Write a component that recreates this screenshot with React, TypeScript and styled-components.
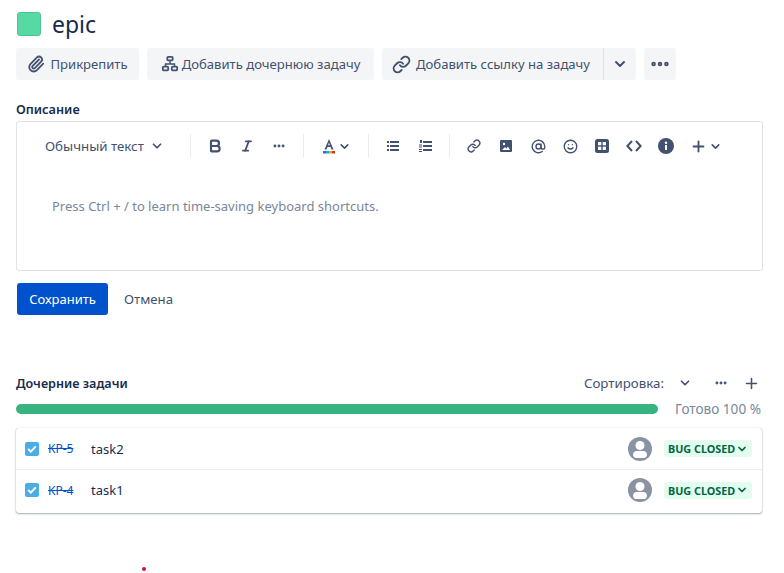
import React from "react";
import styled, { createGlobalStyle } from "styled-components";
import {
  Paperclip,
  Link as LinkIcon,
  ChevronDown,
  Bold,
  Italic,
  MoreHorizontal,
  Plus,
  AtSign,
  Smile,
} from "lucide-react";

const GlobalStyle = createGlobalStyle`
  html, body { margin: 0; padding: 0; background: #fff; overflow: hidden; }
  body { font-family: "Noto Sans", "Open Sans", sans-serif; color: #172b4d; }
`;

const Page = styled.div`
  position: relative;
  width: 784px;
  height: 573px;
  padding: 12px 21px 0 16px;
  box-sizing: border-box;
`;

const TitleRow = styled.div`
  display: flex;
  align-items: center;
  gap: 11px;
  height: 24px;
  padding-left: 1px;
`;

const EpicSwatch = styled.div`
  width: 24px;
  height: 24px;
  box-sizing: border-box;
  border-radius: 3px;
  background: #57d9a3;
  border: 1px solid #4cc392;
`;

const Title = styled.h1`
  margin: 0;
  font-size: 23px;
  font-weight: 400;
  line-height: 28px;
`;

const ActionBar = styled.div`
  display: flex;
  gap: 8px;
  margin-top: 12px;
`;

const ActionButton = styled.button<{ $w: number; $joined?: boolean; $gap?: number }>`
  display: flex;
  align-items: center;
  justify-content: ${(p) => (p.$joined === undefined ? "center" : "flex-start")};
  gap: ${(p) => p.$gap ?? 5}px;
  width: ${(p) => p.$w}px;
  height: 32px;
  padding: 0 ${(p) => (p.$joined === undefined ? 0 : 10)}px;
  border: none;
  border-radius: 3px;
  background: #f4f5f7;
  color: #42526e;
  font: 400 13.1px "Noto Sans", sans-serif;
  white-space: nowrap;
`;

const SplitGroup = styled.div`
  display: flex;
`;

const SplitMain = styled(ActionButton)`
  border-radius: 3px 0 0 3px;
  border-right: 1px solid #dfe1e6;
`;

const SplitArrow = styled(ActionButton)`
  border-radius: 0 3px 3px 0;
`;

const SectionLabel = styled.h2`
  margin: 19px 0 0;
  font-size: 12.7px;
  font-weight: 600;
  line-height: 20px;
  color: #172b4d;
`;

const Editor = styled.div`
  height: 150px;
  margin-top: 2px;
  box-sizing: border-box;
  border: 1px solid #dfe1e6;
  border-radius: 3px;
`;

const Toolbar = styled.div`
  display: flex;
  align-items: center;
  height: 24px;
  margin-top: 12px;
  color: #42526e;
`;

const BlockSelect = styled.div`
  display: flex;
  align-items: center;
  gap: 6px;
  width: 165px;
  padding-left: 28px;
  box-sizing: border-box;
  font-size: 13.3px;
  white-space: nowrap;
`;

const ToolDivider = styled.div`
  width: 1px;
  height: 24px;
  background: #ebecf0;
  margin: 0 8px;
`;

const Tool = styled.span<{ $w?: number }>`
  display: flex;
  align-items: center;
  justify-content: center;
  gap: 2px;
  width: ${(p) => p.$w ?? 32}px;
  height: 24px;
  color: #42526e;
`;

const Placeholder = styled.div`
  margin: 38px 0 0 35px;
  font-size: 13px;
  line-height: 20px;
  color: #7a869a;
`;

const FormActions = styled.div`
  display: flex;
  align-items: center;
  gap: 16px;
  margin: 12px 0 0 1px;
`;

const SaveButton = styled.button`
  width: 91px;
  height: 32px;
  border: none;
  border-radius: 3px;
  background: #0052cc;
  color: #fff;
  font: 400 13px "Noto Sans", sans-serif;
`;

const CancelLink = styled.span`
  font-size: 13.2px;
  color: #42526e;
`;

const ChildHeader = styled.div`
  display: flex;
  align-items: center;
  justify-content: space-between;
  margin-top: 58px;
  height: 20px;
`;

const ChildTitle = styled.h3`
  margin: 0;
  font-size: 12.6px;
  font-weight: 600;
  color: #172b4d;
`;

const ChildTools = styled.div`
  display: flex;
  align-items: center;
  padding-right: 3px;
  color: #42526e;
  font-size: 13.3px;
`;

const SortLabel = styled.span`
  margin-right: 14px;
`;

const HeaderIcon = styled.span<{ $gap?: number }>`
  display: flex;
  margin-left: ${(p) => p.$gap ?? 0}px;
`;

const ProgressRow = styled.div`
  display: flex;
  align-items: center;
  gap: 17px;
  margin-top: 11px;
`;

const ProgressTrack = styled.div`
  width: 642px;
  height: 10px;
  border-radius: 5px;
  background: #36b37e;
`;

const ProgressLabel = styled.span`
  font-size: 13.6px;
  line-height: 10px;
  color: #7a869a;
  white-space: nowrap;
`;

const TaskCard = styled.div`
  width: 746px;
  margin-top: 14px;
  border-radius: 3px;
  box-shadow: 0 1px 2px rgba(9, 30, 66, 0.35), 0 0 1px rgba(9, 30, 66, 0.3);
`;

const TaskRow = styled.div<{ $first?: boolean }>`
  display: flex;
  align-items: center;
  height: ${(p) => (p.$first ? 42 : 43)}px;
  box-sizing: border-box;
  padding: 0 10px ${(p) => (p.$first ? 0 : 3)}px 9px;
  border-bottom: ${(p) => (p.$first ? "1px solid #ebecf0" : "none")};
`;

const CheckBox = styled.span`
  display: flex;
  align-items: center;
  justify-content: center;
  width: 14px;
  height: 14px;
  border-radius: 2px;
  background: #4bade8;
`;

const TaskKey = styled.a`
  margin-left: 9px;
  width: 43px;
  font-size: 12px;
  color: #0052cc;
  text-decoration: line-through;
`;

const TaskName = styled.span`
  flex: 1;
  font-size: 13px;
  color: #172b4d;
`;

const Avatar = styled.span`
  display: flex;
  margin-right: 12px;
`;

const StatusLozenge = styled.span`
  display: flex;
  align-items: center;
  gap: 1px;
  width: 88px;
  height: 17px;
  box-sizing: border-box;
  padding-left: 4px;
  border-radius: 3px;
  background: #e3fcef;
  color: #006644;
  font-size: 10.8px;
  font-weight: 700;
  white-space: nowrap;
`;

const RedDot = styled.span`
  position: absolute;
  left: 142px;
  top: 567px;
  width: 4px;
  height: 4px;
  border-radius: 50%;
  background: #e0102a;
`;

const HierarchyIcon = () => (
  <svg width="18" height="18" viewBox="0 0 20 20" fill="none" stroke="#42526e" strokeWidth="2">
    <rect x="7" y="2" width="6" height="4" rx="1" />
    <rect x="2" y="13" width="6" height="4" rx="1" />
    <rect x="12" y="13" width="6" height="4" rx="1" />
    <path d="M10 6v4M5 13v-3h10v3" strokeWidth="1.6" />
  </svg>
);

const BulletIcon = () => (
  <svg width="12" height="10" viewBox="0 0 12 10" fill="#42526e">
    <rect x="0" y="0" width="2" height="2" />
    <rect x="0" y="4" width="2" height="2" />
    <rect x="0" y="8" width="2" height="2" />
    <rect x="3" y="0" width="9" height="2" />
    <rect x="3" y="4" width="9" height="2" />
    <rect x="3" y="8" width="9" height="2" />
  </svg>
);

const NumberIcon = () => (
  <svg width="13" height="12" viewBox="0 0 13 12" fill="#42526e">
    <rect x="1" y="0" width="2" height="3" />
    <rect x="0" y="4.500" width="3" height="1" />
    <rect x="0" y="6.500" width="3" height="1" />
    <rect x="0" y="9" width="3" height="1" />
    <rect x="0" y="11" width="3" height="1" />
    <rect x="4" y="1" width="9" height="2" />
    <rect x="4" y="5" width="9" height="2" />
    <rect x="4" y="9" width="9" height="2" />
  </svg>
);

const ImageIcon = () => (
  <svg width="12" height="12" viewBox="0 0 12 12">
    <rect width="12" height="12" rx="1" fill="#42526e" />
    <circle cx="4" cy="4" r="1.2" fill="#fff" />
    <path d="M2 10l3-3 1.500 1.500L8 6.500 10 10z" fill="#fff" />
  </svg>
);

const TableIcon = () => (
  <svg width="14" height="14" viewBox="0 0 14 14">
    <rect width="14" height="14" rx="2.500" fill="#42526e" />
    <rect x="3" y="3" width="3.300" height="3.300" fill="#fff" />
    <rect x="7.700" y="3" width="3.300" height="3.300" fill="#fff" />
    <rect x="3" y="7.700" width="3.300" height="3.300" fill="#fff" />
    <rect x="7.700" y="7.700" width="3.300" height="3.300" fill="#fff" />
  </svg>
);

const CodeIcon = () => (
  <svg width="16" height="12" viewBox="0 0 16 12" fill="none" stroke="#42526e" strokeWidth="2">
    <path d="M6 1L1.400 6 6 11M10 1l4.600 5L10 11" />
  </svg>
);

const InfoIcon = () => (
  <svg width="16" height="16" viewBox="0 0 16 16">
    <circle cx="8" cy="8" r="8" fill="#42526e" />
    <rect x="7" y="7" width="2" height="5" fill="#fff" />
    <circle cx="8" cy="4.700" r="1.200" fill="#fff" />
  </svg>
);

const TextColorIcon = () => (
  <svg width="14" height="16" viewBox="0 0 14 16">
    <path d="M7 1L2.500 11.500h2l1-2.600h3l1 2.600h2L7 1zM6.100 7.200L7 4.600l.9 2.600z" fill="#42526e" />
    <rect x="1" y="13" width="3" height="2.500" fill="#6554c0" />
    <rect x="4" y="13" width="3" height="2.500" fill="#00b8d9" />
    <rect x="7" y="13" width="3" height="2.500" fill="#ff991f" />
    <rect x="10" y="13" width="3" height="2.500" fill="#de350b" />
  </svg>
);

const CheckMark = () => (
  <svg width="10" height="8" viewBox="0 0 10 8" fill="none" stroke="#fff" strokeWidth="2">
    <path d="M1.200 4l2.600 2.600L8.800 1.400" />
  </svg>
);

const PersonAvatar = () => (
  <svg width="24" height="24" viewBox="0 0 24 24">
    <circle cx="12" cy="12" r="12" fill="#8993a4" />
    <circle cx="12" cy="8.500" r="4.500" fill="#fff" />
    <path d="M5 17.500c0-2.500 2-3.500 4-3.500h6c2 0 4 1 4 3.500 0 1.500-1 3.500-3 3.500H8c-2 0-3-2-3-3.500z" fill="#fff" />
  </svg>
);

const Chevron = ({ size = 16 }: { size?: number }) => <ChevronDown size={size} strokeWidth={3} />;

const tasks = [
  { key: "KP-5", name: "task2" },
  { key: "KP-4", name: "task1" },
];

export default function App() {
  return (
    <>
      <GlobalStyle />
      <Page>
        <TitleRow>
          <EpicSwatch />
          <Title>epic</Title>
        </TitleRow>

        <ActionBar>
          <ActionButton $w={123}>
            <Paperclip size={18} strokeWidth={2.4} />
            Прикрепить
          </ActionButton>
          <ActionButton $w={227} $gap={3}>
            <HierarchyIcon />
            Добавить дочернюю задачу
          </ActionButton>
          <SplitGroup>
            <SplitMain $w={222} $joined>
              <LinkIcon size={19} strokeWidth={2.4} />
              Добавить ссылку на задачу
            </SplitMain>
            <SplitArrow $w={32}>
              <Chevron />
            </SplitArrow>
          </SplitGroup>
          <ActionButton $w={32}>
            <MoreHorizontal size={22} strokeWidth={3} />
          </ActionButton>
        </ActionBar>

        <SectionLabel>Описание</SectionLabel>
        <Editor>
          <Toolbar>
            <BlockSelect>
              Обычный текст
              <Chevron size={14} />
            </BlockSelect>
            <ToolDivider />
            <Tool>
              <Bold size={16} strokeWidth={3.2} />
            </Tool>
            <Tool>
              <Italic size={14} strokeWidth={3} />
            </Tool>
            <Tool>
              <MoreHorizontal size={14} strokeWidth={3} />
            </Tool>
            <ToolDivider />
            <Tool $w={48}>
              <TextColorIcon />
              <Chevron size={13} />
            </Tool>
            <ToolDivider />
            <Tool>
              <BulletIcon />
            </Tool>
            <Tool>
              <NumberIcon />
            </Tool>
            <ToolDivider />
            <Tool>
              <LinkIcon size={14} strokeWidth={2.4} />
            </Tool>
            <Tool>
              <ImageIcon />
            </Tool>
            <Tool>
              <AtSign size={15} strokeWidth={2.2} />
            </Tool>
            <Tool>
              <Smile size={15} strokeWidth={2.2} />
            </Tool>
            <Tool>
              <TableIcon />
            </Tool>
            <Tool>
              <CodeIcon />
            </Tool>
            <Tool>
              <InfoIcon />
            </Tool>
            <Tool $w={48}>
              <Plus size={17} strokeWidth={2.6} />
              <Chevron size={13} />
            </Tool>
          </Toolbar>
          <Placeholder>Press Ctrl + / to learn time-saving keyboard shortcuts.</Placeholder>
        </Editor>

        <FormActions>
          <SaveButton>Сохранить</SaveButton>
          <CancelLink>Отмена</CancelLink>
        </FormActions>

        <ChildHeader>
          <ChildTitle>Дочерние задачи</ChildTitle>
          <ChildTools>
            <SortLabel>Сортировка:</SortLabel>
            <Chevron size={14} />
            <HeaderIcon $gap={22}>
              <MoreHorizontal size={14} strokeWidth={3} />
            </HeaderIcon>
            <HeaderIcon $gap={15}>
              <Plus size={17} strokeWidth={2.2} />
            </HeaderIcon>
          </ChildTools>
        </ChildHeader>

        <ProgressRow>
          <ProgressTrack />
          <ProgressLabel>Готово 100 %</ProgressLabel>
        </ProgressRow>

        <TaskCard>
          {tasks.map((task, index) => (
            <TaskRow key={task.key} $first={index === 0}>
              <CheckBox>
                <CheckMark />
              </CheckBox>
              <TaskKey>{task.key}</TaskKey>
              <TaskName>{task.name}</TaskName>
              <Avatar>
                <PersonAvatar />
              </Avatar>
              <StatusLozenge>
                BUG CLOSED
                <ChevronDown size={12} strokeWidth={3.5} />
              </StatusLozenge>
            </TaskRow>
          ))}
        </TaskCard>

        <RedDot />
      </Page>
    </>
  );
}
